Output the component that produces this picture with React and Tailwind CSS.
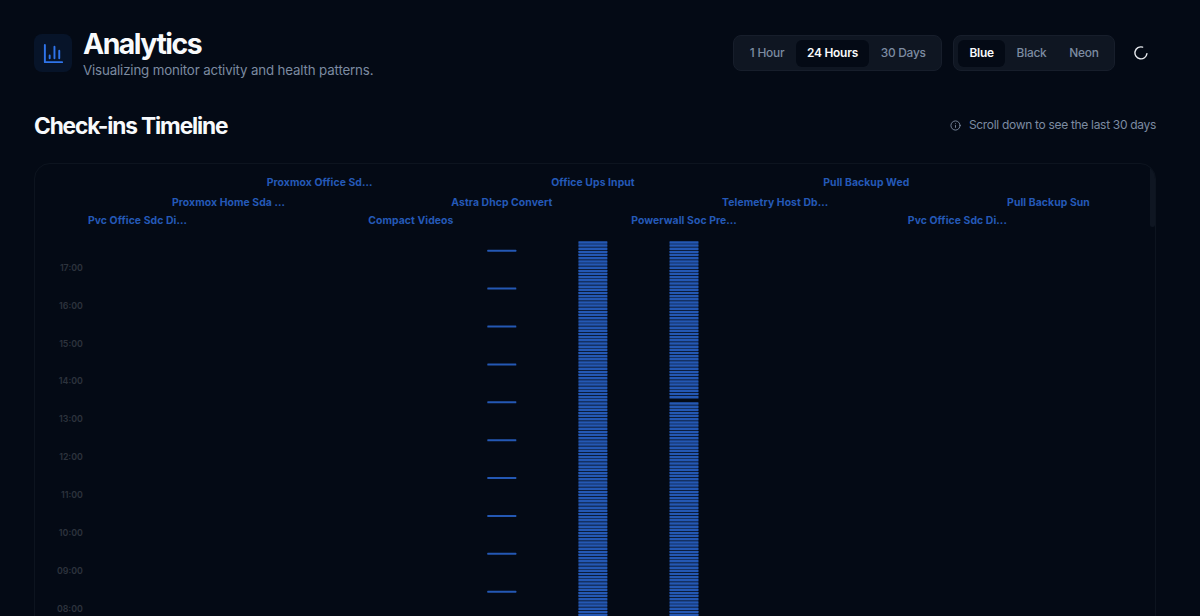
import React, { useState } from 'react';
import { Info } from 'lucide-react';

const ranges = ['1 Hour', '24 Hours', '30 Days'];
const themes = ['Blue', 'Black', 'Neon'];

const monitors = [
  { name: 'Pvc Office Sdc Di...', row: 2 },
  { name: 'Proxmox Home Sda ...', row: 1 },
  { name: 'Proxmox Office Sd...', row: 0 },
  { name: 'Compact Videos', row: 2 },
  { name: 'Astra Dhcp Convert', row: 1, every: 60, offset: 26.5 },
  { name: 'Office Ups Input', row: 0, every: 5, offset: 13 },
  { name: 'Powerwall Soc Pre...', row: 2, every: 5, offset: 13, missed: [50] },
  { name: 'Telemetry Host Db...', row: 1 },
  { name: 'Pull Backup Wed', row: 0 },
  { name: 'Pvc Office Sdc Di...', row: 2 },
  { name: 'Pull Backup Sun', row: 1 }
];

const hours = ['17:00', '16:00', '15:00', '14:00', '13:00', '12:00', '11:00', '10:00', '09:00', '08:00'];

const HOUR_HEIGHT = 37.89;
const COLUMN_WIDTH = 91.1;
const LABEL_Y = [21.7, 41.8, 60.2];

const BarsIcon = () => (
  <svg viewBox="0 0 24 24" className="w-[23px] h-[23px]" fill="none" stroke="#2f74ea" strokeWidth="2" strokeLinecap="round" strokeLinejoin="round">
    <path d="M3 3v18h18" />
    <path d="M8 17v-3M13 17V5M18 17V9" />
  </svg>
);

const Segmented = ({ options, value, onChange }) => (
  <div className="flex h-9 items-center rounded-lg border border-[#171e2b] bg-[#0f1622] px-1">
    {options.map((option) => (
      <button
        key={option}
        onClick={() => onChange(option)}
        className={`h-[27px] rounded-md px-[11.4px] text-[11.9px] tracking-[-0.24px] ${
          option === value ? 'bg-[#040a15] font-semibold text-[#f8fafc]' : 'font-medium text-[#7c8ba1]'
        }`}
      >
        {option}
      </button>
    ))}
  </div>
);

const Timeline = () => (
  <svg width="1120" height="600" className="block">
    {monitors.map((monitor, index) => {
      const center = 102.5 + index * COLUMN_WIDTH;
      const count = monitor.every ? Math.floor(600 / monitor.every) + 120 : 0;
      const height = monitor.every === 5 ? 2.5 : 2;
      const marks = [];
      for (let i = 0; i < count; i++) {
        if (monitor.missed?.includes(i)) continue;
        const minutes = i * monitor.every + monitor.offset;
        const y = 69 + (minutes / 60) * HOUR_HEIGHT;
        if (y > 600) break;
        marks.push(
          <rect key={i} x={center - 14.6} y={y} width="29" height={height} rx="0.5" fill="#2458b4" />
        );
      }
      return (
        <g key={index}>
          <text
            x={center}
            y={LABEL_Y[monitor.row]}
            textAnchor="middle"
            fill="#2459b7"
            fontSize="10.4"
            fontWeight="700"
            letterSpacing="0.08"
          >
            {monitor.name}
          </text>
          {marks}
        </g>
      );
    })}
    {hours.map((hour, i) => (
      <text key={hour} x="47.8" y={106.8 + i * HOUR_HEIGHT} textAnchor="end" fill="#2d333d" fontSize="8.8" fontWeight="600">
        {hour}
      </text>
    ))}
  </svg>
);

export default function App() {
  const [range, setRange] = useState('24 Hours');
  const [theme, setTheme] = useState('Blue');

  return (
    <div className="h-[616px] overflow-hidden bg-[#040a15] pl-[34px] pr-11 font-['Inter',sans-serif] text-[#f8fafc]">
      <header className="flex h-[106px] items-center justify-between">
        <div className="flex items-center gap-[11px]">
          <div className="flex h-[38px] w-[38px] items-center justify-center rounded-lg bg-[#071429]">
            <BarsIcon />
          </div>
          <div>
            <h1 className="text-[28.4px] font-bold leading-[34px] tracking-[-1.5px]">Analytics</h1>
            <p className="text-[13.3px] leading-[19px] tracking-[-0.15px] text-[#7c8ba1]">Visualizing monitor activity and health patterns.</p>
          </div>
        </div>
        <div className="flex items-center gap-[11px]">
          <Segmented options={ranges} value={range} onChange={setRange} />
          <Segmented options={themes} value={theme} onChange={setTheme} />
          <div className="flex w-[30px] items-center justify-center">
            <svg width="14" height="14" viewBox="0 0 14 14" fill="none" stroke="#e8ebef" strokeWidth="1.4" strokeLinecap="round">
              <path d="M8.6 1.1A6 6 0 1 0 12.9 7.6" />
            </svg>
          </div>
        </div>
      </header>

      <div className="flex h-[38px] items-center justify-between">
        <h2 className="pt-0.5 text-[22.7px] font-bold tracking-[-1.15px]">Check-ins Timeline</h2>
        <div className="flex items-center gap-2 text-[#7c8ba1]">
          <Info size={11} />
          <span className="text-xs tracking-[-0.31px]">Scroll down to see the last 30 days</span>
        </div>
      </div>

      <div className="relative mt-[19px] h-[480px] overflow-hidden rounded-t-2xl border border-[#0d141f]">
        <Timeline />
        {/* Scrollbar thumb */}
        <div className="absolute right-0 top-0 h-[63px] w-[5px] rounded-b bg-[#0f1622]" />
      </div>
    </div>
  );
}
